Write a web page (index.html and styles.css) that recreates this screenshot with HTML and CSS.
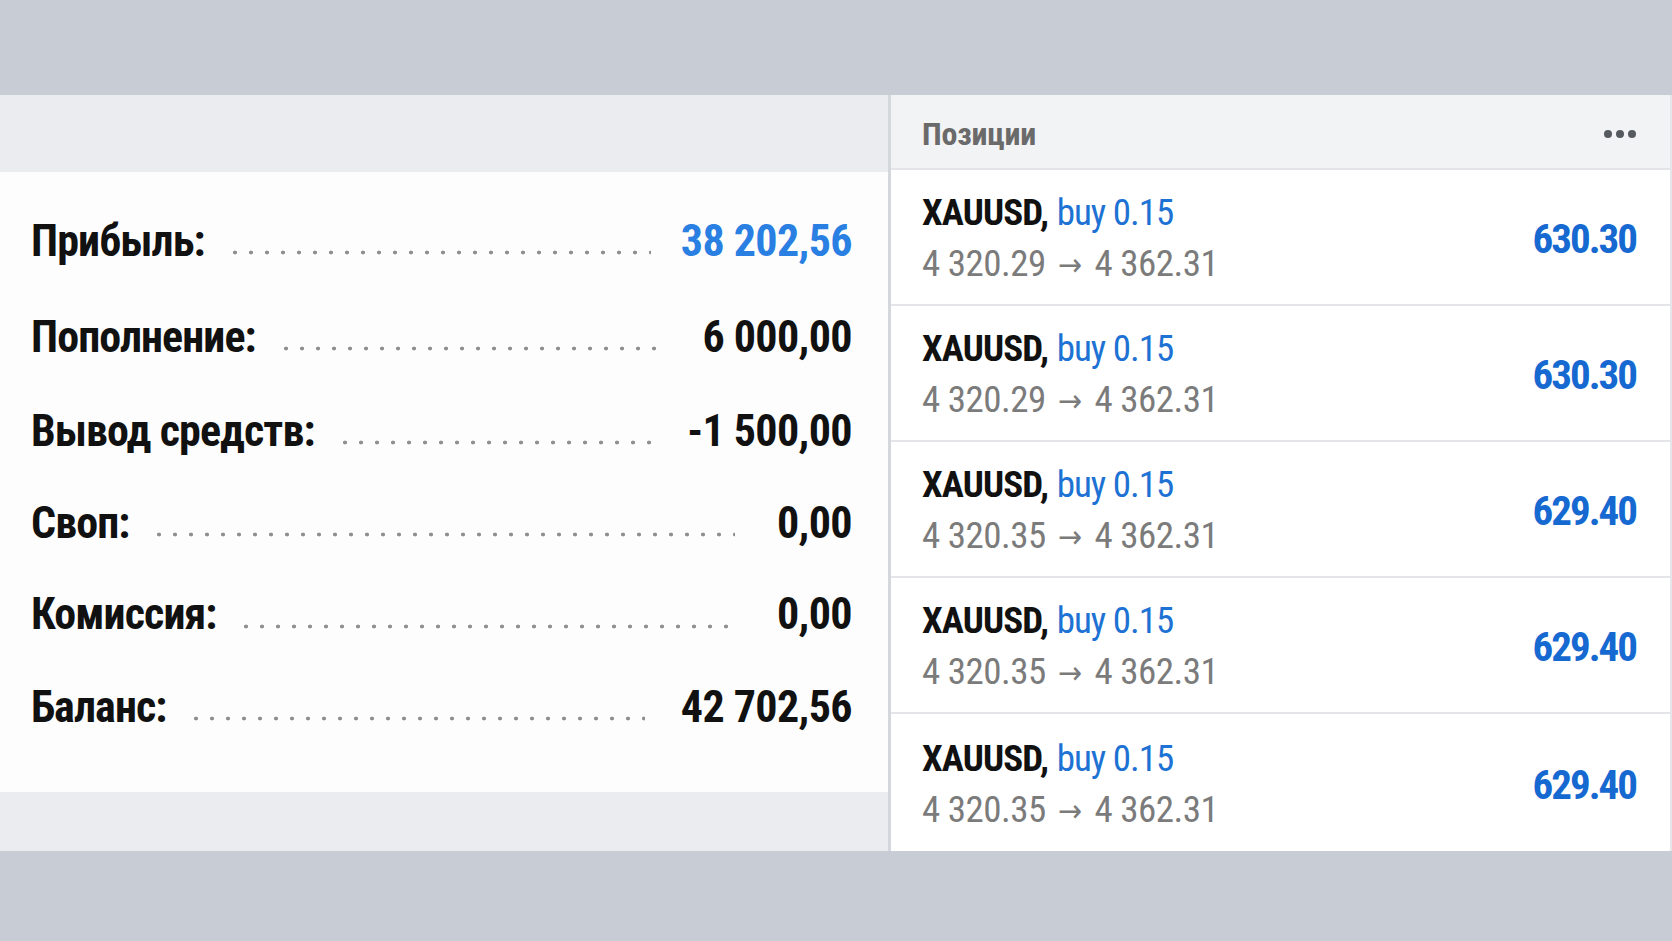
FILE: index.html
```html
<!DOCTYPE html>
<html lang="ru">
<head>
<meta charset="utf-8">
<title>Счёт</title>
<link rel="stylesheet" href="styles.css">
</head>
<body>
<div class="stage">
  <section class="summary">
    <div class="summary-head"></div>
    <div class="summary-body">
      <div class="srow r1"><span class="slabel">Прибыль:</span><span class="leader"></span><span class="svalue blue">38 202,56</span></div>
      <div class="srow r2"><span class="slabel">Пополнение:</span><span class="leader"></span><span class="svalue">6 000,00</span></div>
      <div class="srow r3"><span class="slabel">Вывод средств:</span><span class="leader"></span><span class="svalue">-1 500,00</span></div>
      <div class="srow r4"><span class="slabel">Своп:</span><span class="leader"></span><span class="svalue">0,00</span></div>
      <div class="srow r5"><span class="slabel">Комиссия:</span><span class="leader"></span><span class="svalue">0,00</span></div>
      <div class="srow r6"><span class="slabel">Баланс:</span><span class="leader"></span><span class="svalue">42 702,56</span></div>
    </div>
    <div class="summary-foot"></div>
  </section>
  <div class="divider"></div>
  <section class="positions">
    <header class="pos-head">
      <span class="pos-title">Позиции</span>
      <span class="more"><i></i><i></i><i></i></span>
    </header>
    <div class="prow">
      <div class="pinfo">
        <div class="pline1"><span class="sym">XAUUSD,</span> <span class="side">buy 0.15</span></div>
        <div class="pline2">4 320.29<span class="arrow">→</span>4 362.31</div>
      </div>
      <div class="pprofit">630.30</div>
    </div>
    <div class="prow">
      <div class="pinfo">
        <div class="pline1"><span class="sym">XAUUSD,</span> <span class="side">buy 0.15</span></div>
        <div class="pline2">4 320.29<span class="arrow">→</span>4 362.31</div>
      </div>
      <div class="pprofit">630.30</div>
    </div>
    <div class="prow">
      <div class="pinfo">
        <div class="pline1"><span class="sym">XAUUSD,</span> <span class="side">buy 0.15</span></div>
        <div class="pline2">4 320.35<span class="arrow">→</span>4 362.31</div>
      </div>
      <div class="pprofit">629.40</div>
    </div>
    <div class="prow">
      <div class="pinfo">
        <div class="pline1"><span class="sym">XAUUSD,</span> <span class="side">buy 0.15</span></div>
        <div class="pline2">4 320.35<span class="arrow">→</span>4 362.31</div>
      </div>
      <div class="pprofit">629.40</div>
    </div>
    <div class="prow last">
      <div class="pinfo">
        <div class="pline1"><span class="sym">XAUUSD,</span> <span class="side">buy 0.15</span></div>
        <div class="pline2">4 320.35<span class="arrow">→</span>4 362.31</div>
      </div>
      <div class="pprofit">629.40</div>
    </div>
  </section>
</div>
</body>
</html>
```
FILE: styles.css
```css
html, body {
  margin: 0;
  padding: 0;
}
body {
  background: #c8ccd4;
  font-family: "Roboto Condensed", "DejaVu Sans Condensed", Roboto, sans-serif;
  width: 1672px;
  height: 941px;
  overflow: hidden;
}
.stage {
  display: flex;
  margin-top: 95px;
  height: 756px;
}
.summary {
  width: 888px;
  display: flex;
  flex-direction: column;
  background: #ffffff;
}
.summary-head {
  height: 77px;
  background: #eaecef;
}
.summary-body {
  flex: 1;
  padding: 20px 36px 0 31px;
  background: #fdfdfd;
}
.summary-foot {
  height: 59px;
  background: #eaecef;
}
.srow {
  height: 93px;
  display: flex;
  align-items: center;
}
.srow.r1 { height: 97px; }
.srow.r2 { height: 95px; }
.srow.r3 { height: 93px; }
.srow.r4 { height: 91px; }
.srow.r5 { height: 92px; }
.slabel, .svalue {
  font-size: 44px;
  font-weight: 700;
  color: #111111;
  white-space: nowrap;
  letter-spacing: -0.9px;
}
.svalue {
  letter-spacing: -0.6px;
}
.svalue.blue {
  color: #2a7fe2;
}
.leader {
  flex: 1;
  height: 5px;
  margin: 0 36px 0 22px;
  transform: translateY(12px);
  background-image: radial-gradient(circle, #8f8f8f 1.7px, transparent 2.2px);
  background-size: 16px 5px;
  background-repeat: repeat-x;
}
.r1 .leader { margin-right: 30px; }
.r2 .leader { margin-right: 44px; }
.r4 .leader, .r5 .leader { margin-right: 42px; }
.divider {
  width: 3px;
  background: #d4d7dc;
}
.positions {
  flex: 1;
  display: flex;
  flex-direction: column;
  background: #ffffff;
  border-right: 2px solid #e4e6e9;
}
.pos-head {
  height: 69px;
  display: flex;
  align-items: center;
  justify-content: space-between;
  padding: 4px 34px 0 31px;
  background: #f2f3f5;
  border-bottom: 2px solid #e2e4e7;
}
.pos-title {
  font-size: 32px;
  font-weight: 700;
  color: #6a6a6a;
  letter-spacing: -0.2px;
}
.more {
  display: flex;
  gap: 4px;
}
.more i {
  display: block;
  width: 8px;
  height: 8px;
  border-radius: 50%;
  background: #555a60;
}
.prow {
  display: flex;
  align-items: center;
  justify-content: space-between;
  padding: 4px 34px 0 31px;
  box-sizing: border-box;
  border-bottom: 2px solid #e3e5e8;
  height: 136px;
}
.prow.last {
  border-bottom: none;
  flex: 1;
}
.pinfo {
  line-height: 51px;
}
.pline1 {
  font-size: 37px;
  white-space: nowrap;
}
.sym {
  font-weight: 700;
  color: #111111;
  letter-spacing: -0.9px;
}
.side {
  color: #1d72d3;
  letter-spacing: -1px;
}
.pline2 {
  font-size: 37px;
  color: #7b7b7b;
  white-space: nowrap;
  letter-spacing: -0.5px;
}
.arrow {
  font-size: 32px;
  margin: 0 13px 0 12px;
}
.pprofit {
  font-size: 41px;
  font-weight: 700;
  color: #1569d0;
  letter-spacing: -2px;
}
```
